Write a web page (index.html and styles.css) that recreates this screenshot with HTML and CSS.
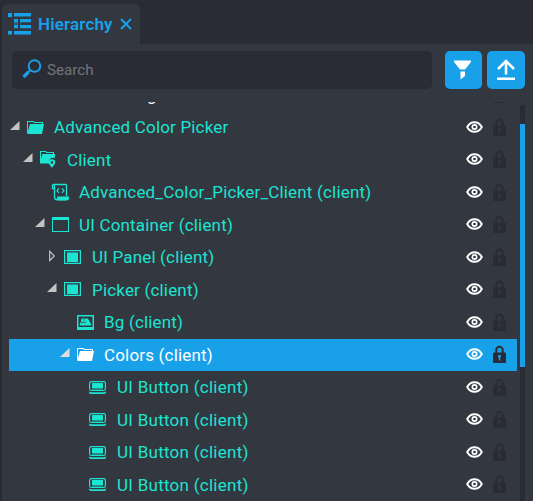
FILE: index.html
```html
<!DOCTYPE html>
<html lang="en">
<head>
<meta charset="utf-8">
<title>Hierarchy</title>
<link rel="stylesheet" href="styles.css">
</head>
<body>
<svg class="defs" width="0" height="0" aria-hidden="true">
  <symbol id="open" viewBox="0 0 12 12"><path d="M10.500 1v9H1z"/></symbol>
  <symbol id="closed" viewBox="0 0 12 12"><path d="M3.700 1.300v9.200L8.300 6z" fill="none" stroke="currentColor" stroke-width="1.200"/></symbol>
  <symbol id="folder" viewBox="0 0 20 20"><path d="M1 3h6.500l1 1H17v2h-1V5H8L7 4H2v9L4 6h14l-2 10H2l-1-1z"/></symbol>
  <symbol id="client" viewBox="0 0 20 20"><path d="M1 1h6l1 1h7v2h-1V3H7.500l-1-1H2v7l1.500-5H16.300l-.7 4.200a4 4 0 0 0-5.200 5.300H1z"/><path fill-rule="evenodd" d="M13 9.300a3.200 3.200 0 0 0-3.200 3.200c0 2 3.200 5.200 3.200 5.200s3.200-3.200 3.200-5.200A3.200 3.200 0 0 0 13 9.300zm0 2a1.200 1.200 0 1 1 0 2.400 1.200 1.200 0 0 1 0-2.400z"/></symbol>
  <symbol id="script" viewBox="0 0 20 20"><path d="M3.500 5.500h-2V2.500a1 1 0 0 1 1-1h12a1 1 0 0 1 1 1V13M3.500 2v12.500q0 2 2.500 2h9" fill="none" stroke="currentColor" stroke-width="1.300"/><path d="M6 13.500h12v1.500q0 2.500-2.500 2.500H5.500Q7 16 6 13.500z"/><path d="M8 5.500 6 7.700l2 2.200m3-4.400 2 2.200-2 2.200" fill="none" stroke="currentColor" stroke-width="1.200"/></symbol>
  <symbol id="container" viewBox="0 0 20 20"><path fill-rule="evenodd" d="M1 2h17v15H1zm1 3v11h15V5z"/></symbol>
  <symbol id="panel" viewBox="0 0 20 20"><path fill-rule="evenodd" d="M1 2h17v14H1zM2.200 3.200v11.600h14.600V3.200z"/><path d="M4 4.500h11v9.500H4z"/></symbol>
  <symbol id="image" viewBox="0 0 20 20"><path fill-rule="evenodd" d="M1 2h17v15H1zm1.500 1.500v10.500h14V3.500z"/><path d="M4 12.500V10l1-1V6.500L7 5 9.500 6l1.500-1L13 7l2 4v1.500z"/><path d="m5 10 2-1 1.500 1L10 8.500M7 6.500l1.500.8" fill="none" stroke="#33373f" stroke-width=".8"/></symbol>
  <symbol id="button" viewBox="0 0 20 20"><rect x="1.600" y="3.600" width="15.800" height="8.900" rx="1.800" fill="none" stroke="currentColor" stroke-width="1.200"/><path d="M4 5h11v5.500H4z"/><path d="M4 11h11v1H4z" opacity=".4"/><path d="M1 13.500q1 .7 2.500.7h12q1.500 0 2.500-.7v1q-.5 1.500-2 1.500H3q-1.500 0-2-1.500z"/></symbol>
  <symbol id="eye" viewBox="0 0 18 14"><path d="M2.200 7Q4.800 2.200 9.500 2.200T16.800 7Q14.200 11.800 9.500 11.800T2.200 7z" fill="none" stroke="currentColor" stroke-width="1.900"/><circle cx="9.500" cy="7" r="2.200" fill="none" stroke="currentColor" stroke-width="1.700"/></symbol>
  <symbol id="lock" viewBox="0 0 14 18"><path d="M3.300 8V5a3.200 3.200 0 0 1 6.400 0v3" fill="none" stroke="currentColor" stroke-width="2"/><path fill-rule="evenodd" d="M.7 7.500h11.600l.7.700v9l-.7.800H.7l-.7-.8v-9zM6.500 9.800a1.500 1.500 0 0 0-1 2.600l.3.500V15.500h1.400v-2.600l.3-.5a1.500 1.500 0 0 0-1-2.600z"/></symbol>
</svg>

<div class="panel">
  <div class="tab">
    <svg class="tab-icon" viewBox="0 0 24 24"><path d="M0 1h4v4H0zM6 1h17v3.500H6zM6 7h4v3.300H6zM12 7h11v3.300H12zM6 13h4v3.300H6zM12 13h11v3.300H12zM0 19h4v3.500H0zM6 19h17v3.500H6z"/><path d="M6 10h4v3H6zM12 10h1v3h-1z" opacity=".4"/></svg>
    <span class="tab-title">Hierarchy</span>
    <svg class="tab-close" viewBox="0 0 12 12"><path d="m1 1 10 10M11 1 1 11"/></svg>
  </div>
  <div class="body">
    <div class="toolbar">
      <div class="search">
        <svg class="search-icon" viewBox="0 0 20 20"><circle cx="12.500" cy="7" r="5.800" stroke-width="1.900"/><path d="m8 11.500-2 2" stroke-width="1.900"/><path d="m6.500 13-5 5" stroke-width="3.300"/></svg>
        <span>Search</span>
      </div>
      <div class="tool tool-filter"><svg viewBox="0 0 20 20"><path d="M1 1h17v1.500L12 10H7L1 2.500zM7.500 12h4.500V16.500l-4.500 3.500z"/></svg></div>
      <div class="tool tool-upload"><svg viewBox="0 0 20 22"><path d="M1 18.500h18v2.500H1z"/><path d="M10 15.500V3M2 10l8-8 8 8" fill="none" stroke="currentColor" stroke-width="2.500"/></svg></div>
    </div>
    <div class="content">
      <div class="list">
        <div class="row clipped"><span class="label">g</span><svg class="lock"><use href="#lock"/></svg></div>
        <div class="row d0"><svg class="arrow"><use href="#open"/></svg><svg class="icon"><use href="#folder"/></svg><span class="label">Advanced Color Picker</span><svg class="eye"><use href="#eye"/></svg><svg class="lock"><use href="#lock"/></svg></div>
        <div class="row d1"><svg class="arrow"><use href="#open"/></svg><svg class="icon"><use href="#client"/></svg><span class="label">Client</span><svg class="eye"><use href="#eye"/></svg><svg class="lock"><use href="#lock"/></svg></div>
        <div class="row d2"><svg class="arrow"></svg><svg class="icon"><use href="#script"/></svg><span class="label">Advanced_Color_Picker_Client (client)</span><svg class="eye"><use href="#eye"/></svg><svg class="lock"><use href="#lock"/></svg></div>
        <div class="row d2"><svg class="arrow"><use href="#open"/></svg><svg class="icon"><use href="#container"/></svg><span class="label">UI Container (client)</span><svg class="eye"><use href="#eye"/></svg><svg class="lock"><use href="#lock"/></svg></div>
        <div class="row d3"><svg class="arrow"><use href="#closed"/></svg><svg class="icon"><use href="#panel"/></svg><span class="label">UI Panel (client)</span><svg class="eye"><use href="#eye"/></svg><svg class="lock"><use href="#lock"/></svg></div>
        <div class="row d3"><svg class="arrow"><use href="#open"/></svg><svg class="icon"><use href="#panel"/></svg><span class="label">Picker (client)</span><svg class="eye"><use href="#eye"/></svg><svg class="lock"><use href="#lock"/></svg></div>
        <div class="row d4"><svg class="arrow"></svg><svg class="icon"><use href="#image"/></svg><span class="label">Bg (client)</span><svg class="eye"><use href="#eye"/></svg><svg class="lock"><use href="#lock"/></svg></div>
        <div class="row d4 selected"><svg class="arrow"><use href="#open"/></svg><svg class="icon"><use href="#folder"/></svg><span class="label">Colors (client)</span><svg class="eye"><use href="#eye"/></svg><svg class="lock"><use href="#lock"/></svg></div>
        <div class="row d5"><svg class="arrow"></svg><svg class="icon"><use href="#button"/></svg><span class="label">UI Button (client)</span><svg class="eye"><use href="#eye"/></svg><svg class="lock"><use href="#lock"/></svg></div>
        <div class="row d5"><svg class="arrow"></svg><svg class="icon"><use href="#button"/></svg><span class="label">UI Button (client)</span><svg class="eye"><use href="#eye"/></svg><svg class="lock"><use href="#lock"/></svg></div>
        <div class="row d5"><svg class="arrow"></svg><svg class="icon"><use href="#button"/></svg><span class="label">UI Button (client)</span><svg class="eye"><use href="#eye"/></svg><svg class="lock"><use href="#lock"/></svg></div>
        <div class="row d5"><svg class="arrow"></svg><svg class="icon"><use href="#button"/></svg><span class="label">UI Button (client)</span><svg class="eye"><use href="#eye"/></svg><svg class="lock"><use href="#lock"/></svg></div>
      </div>
      <div class="scrollbar"><div class="thumb"></div></div>
    </div>
  </div>
</div>
</body>
</html>
```

FILE: styles.css
```css
* { box-sizing: border-box; }

body {
  margin: 0;
  height: 501px;
  overflow: hidden;
  background: #2a2c35;
  font-family: Roboto, "Liberation Sans", sans-serif;
  font-size: 17px;
  color: #1be4d2;
}

svg { display: block; flex: none; fill: currentColor; }
.defs { display: none; }

.panel {
  height: 501px;
  padding: 4px 0 0 2px;
  display: flex;
  flex-direction: column;
}

.tab {
  display: flex;
  align-items: center;
  width: 138px;
  height: 40px;
  flex: none;
  padding-left: 6px;
  background: #33373f;
  border-radius: 5px 5px 0 0;
  color: #18a0e8;
}
.tab-icon { width: 24px; height: 24px; margin-bottom: 1px; }
.tab-title { margin-left: 6px; width: 75px; font-weight: 600; letter-spacing: .15px; white-space: nowrap; }
.tab-close { width: 12px; height: 12px; margin-left: 7px; stroke: currentColor; stroke-width: 2; }

.body {
  flex: 1;
  min-height: 0;
  display: flex;
  flex-direction: column;
  background: #33373f;
}

.toolbar { display: flex; padding: 7px 0 0 10px; height: 58px; flex: none; }
.search {
  display: flex;
  align-items: center;
  width: 420px;
  height: 38px;
  padding-left: 10px;
  background: #2a2c35;
  border-radius: 5px;
  color: #747578;
  font-size: 15.2px;
}
.search span { margin-left: 5px; }
.search-icon { width: 20px; height: 20px; margin-bottom: 3px; color: #18a0e8; fill: none; stroke: currentColor; }

.tool {
  display: flex;
  justify-content: center;
  height: 38px;
  background: #18a0e8;
  border-radius: 5px;
  color: #fff;
}
.tool-filter { width: 37px; margin-left: 13px; padding-top: 8px; }
.tool-filter svg { width: 20px; height: 21px; margin-right: 2px; }
.tool-upload { width: 38px; margin-left: 5px; padding-top: 8px; }
.tool-upload svg { width: 20px; height: 22px; }

.content { display: flex; flex: 1; min-height: 0; padding-left: 7px; overflow: hidden; }
.list { width: 508px; margin-top: -23px; clip-path: inset(23px 0 0 0); }

.row { display: flex; align-items: center; height: 32px; padding-right: 10px; }
.row:nth-child(odd) { height: 33px; padding-bottom: 1px; }
.row:nth-child(odd) .label { line-height: 32px; }
.d1 { padding-left: 13px; }
.d2 { padding-left: 25px; }
.d3 { padding-left: 37px; }
.d4 { padding-left: 50px; }
.d5 { padding-left: 62px; }

.arrow { width: 12px; height: 12px; margin: 0 5px 4px 0; color: #c3c3c3; }
.icon { width: 20px; height: 20px; }
.label { flex: 1; margin-left: 8px; line-height: 30px; height: 32px; letter-spacing: .18px; white-space: nowrap; }
.d3 .label, .d5 .label { margin-left: 9px; }
.d5 .label { letter-spacing: .26px; }
.eye { width: 18px; height: 14px; margin: 0 10px 2px 0; color: #fff; }
.d1 .arrow, .d3 .arrow { margin-left: -.5px; margin-right: 5.5px; }
.lock { width: 14px; height: 18px; margin-bottom: 2px; color: #2a2c35; }

.selected { color: #fff; background: linear-gradient(#18a0e8, #18a0e8) 0 0 / 100% 32px no-repeat; }
.selected .arrow { color: #ddd; }
.clipped { padding-left: 130px; color: #fff; }

.scrollbar { width: 5px; margin: 3px 0 0 3px; padding-top: 19px; background: #2a2c35; }
.thumb { height: 243px; background: #18a0e8; }
```
